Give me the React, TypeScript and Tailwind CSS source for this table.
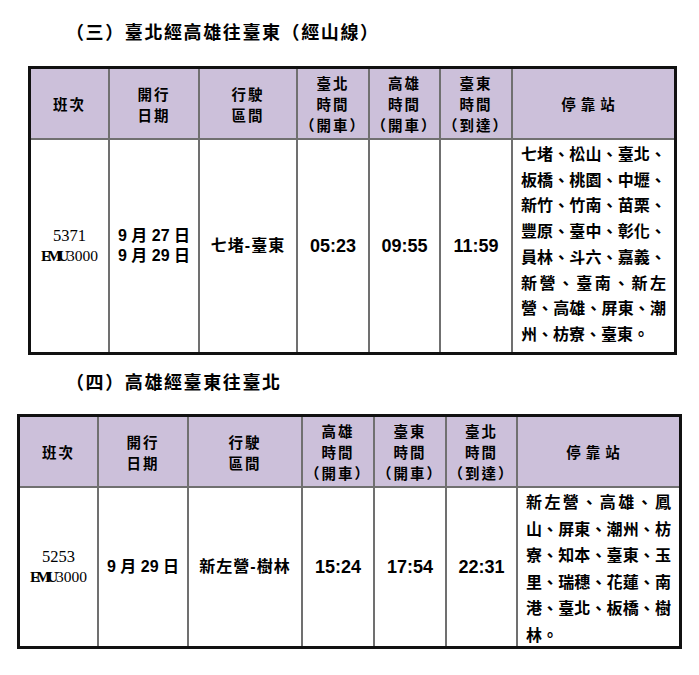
const cjk = "font-['Noto_Sans_CJK_TC',sans-serif]";
const mixed = "font-['Liberation_Sans','Noto_Sans_CJK_TC',sans-serif]";

type TableData = {
  cols: string;
  heads: string[][];
  train: string;
  dates: string[];
  route: string;
  times: string[];
  stops: string[];
  bodyH: string;
  stopLeading: string;
};

const north: TableData = {
  cols: 'grid-cols-[77px_90px_98px_72px_71px_72px_163px] w-[649px] ml-[28px]',
  heads: [['班次'], ['開行', '日期'], ['行駛', '區間'], ['臺北', '時間', '（開車）'], ['高雄', '時間', '（開車）'], ['臺東', '時間', '（到達）'], ['停靠站']],
  train: '5371',
  dates: ['9 月 27 日', '9 月 29 日'],
  route: '七堵-臺東',
  times: ['05:23', '09:55', '11:59'],
  stops: [
    '七堵、松山、臺北、',
    '板橋、桃園、中壢、',
    '新竹、竹南、苗栗、',
    '豐原、臺中、彰化、',
    '員林、斗六、嘉義、',
    '新營、臺南、新左',
    '營、高雄、屏東、潮',
    '州、枋寮、臺東。',
  ],
  bodyH: 'h-[214px]',
  stopLeading: 'leading-[25.7px] pt-px',
};

const south: TableData = {
  cols: 'grid-cols-[77px_90px_114px_72px_72px_71px_163px] w-[665px] ml-[17px]',
  heads: [['班次'], ['開行', '日期'], ['行駛', '區間'], ['高雄', '時間', '（開車）'], ['臺東', '時間', '（開車）'], ['臺北', '時間', '（到達）'], ['停靠站']],
  train: '5253',
  dates: ['9 月 29 日'],
  route: '新左營-樹林',
  times: ['15:24', '17:54', '22:31'],
  stops: [
    '新左營、高雄、鳳',
    '山、屏東、潮州、枋',
    '寮、知本、臺東、玉',
    '里、瑞穗、花蓮、南',
    '港、臺北、板橋、樹',
    '林。',
  ],
  bodyH: 'h-[160px]',
  stopLeading: 'leading-[26.6px]',
};

const Head = ({ lines, first }: { lines: string[]; first: boolean }) => (
  <div
    className={`h-[69px] bg-[#ccc0da] flex flex-col items-center justify-center text-center ${cjk} font-bold text-[14.5px] leading-[21px] text-black ${
      lines[0] === '停靠站' ? 'tracking-[5px] pr-[6px]' : 'tracking-[2px]'
    } ${first ? '' : 'border-l-2 border-[#707070]'}`}
  >
    {lines.map((l) => (
      <div key={l}>{l}</div>
    ))}
  </div>
);

const Cell = ({ h, first, children, className = '' }: { h: string; first?: boolean; children: React.ReactNode; className?: string }) => (
  <div
    className={`${h} border-t-2 border-[#707070] flex flex-col justify-center items-center text-black ${
      first ? '' : 'border-l-2'
    } ${className}`}
  >
    {children}
  </div>
);

const Schedule = ({ data }: { data: TableData }) => (
  <div className={`grid ${data.cols} border-[3px] border-[#111]`}>
    {data.heads.map((h, i) => (
      <Head key={i} lines={h} first={i === 0} />
    ))}

    {/* Train number */}
    <Cell h={data.bodyH} first className="font-['Liberation_Serif',serif] text-[16.5px] leading-[20px]">
      <div>{data.train}</div>
      <div className="text-[15.5px]">
        <span className="tracking-[-4px] font-bold">EM</span>
        <span className="tracking-[-2px] font-bold">U</span>3000
      </div>
    </Cell>

    {/* Dates */}
    <Cell h={data.bodyH} className={`${mixed} font-bold text-[16px] leading-[20px] whitespace-pre`}>
      {data.dates.map((d) => (
        <div key={d}>{d}</div>
      ))}
    </Cell>

    {/* Route */}
    <Cell h={data.bodyH} className={`${mixed} font-bold text-[16px] tracking-[1px]`}>
      {data.route}
    </Cell>

    {data.times.map((t) => (
      <Cell key={t} h={data.bodyH} className="font-['Liberation_Sans',sans-serif] font-bold text-[18px]">
        {t}
      </Cell>
    ))}

    {/* Stops */}
    <div className={`${data.bodyH} border-t-2 border-l-2 border-[#707070] px-[8px] ${data.stopLeading} ${cjk} font-bold text-[16px] text-black`}>
      {data.stops.map((s, i) => (
        <div
          key={s}
          className={i === data.stops.length - 1 ? 'text-left' : 'text-justify [text-align-last:justify]'}
        >
          {s}
        </div>
      ))}
    </div>
  </div>
);

const Title = ({ children }: { children: React.ReactNode }) => (
  <h2 className={`ml-[66px] ${cjk} font-bold text-[18px] leading-[24px] tracking-[1.6px] text-black`}>{children}</h2>
);

export default function App() {
  return (
    <div className="w-[699px] h-[675px] bg-white pt-[19px]">
      <Title>（三）臺北經高雄往臺東（經山線）</Title>
      <div className="mt-[23px]">
        <Schedule data={north} />
      </div>
      <div className="mt-[14px]">
        <Title>（四）高雄經臺東往臺北</Title>
      </div>
      <div className="mt-[21px]">
        <Schedule data={south} />
      </div>
    </div>
  );
}
